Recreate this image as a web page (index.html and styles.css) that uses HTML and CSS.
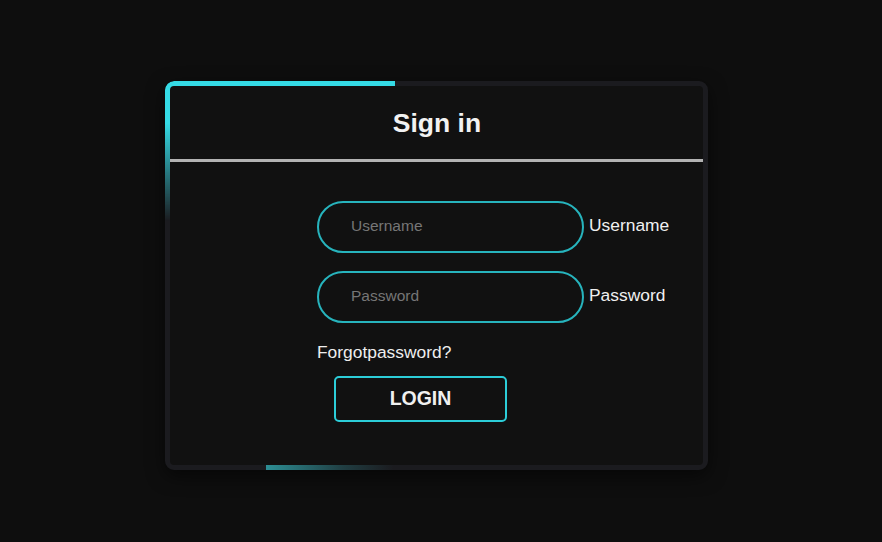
FILE: index.html
```html
<!DOCTYPE html>
<html lang="en">
<head>
<meta charset="utf-8">
<title>Sign in</title>
<link rel="stylesheet" href="styles.css">
</head>
<body>
  <div class="page">
    <div class="card">
      <div class="card-header">
        <h1 class="title">Sign in</h1>
      </div>
      <div class="divider"></div>
      <form class="form">
        <div class="field">
          <input class="input" type="text" placeholder="Username">
          <label class="label">Username</label>
        </div>
        <div class="field">
          <input class="input" type="password" placeholder="Password">
          <label class="label">Password</label>
        </div>
        <div class="forgot">Forgotpassword?</div>
        <button class="login" type="button">LOGIN</button>
      </form>
    </div>
  </div>
</body>
</html>
```

FILE: styles.css
```css
* { box-sizing: border-box; }

html, body {
  margin: 0;
  padding: 0;
  background: #0e0e0e;
  font-family: "Liberation Sans", Arial, sans-serif;
}

.page {
  width: 882px;
  height: 542px;
  padding: 81px 0 0 165px;
}

.card {
  position: relative;
  width: 543px;
  height: 389px;
  background: #111111;
  border: 5px solid #1b1b1f;
  border-radius: 9px;
  box-shadow: 0 6px 18px rgba(0, 0, 0, 0.55);
}

.card::before {
  content: "";
  position: absolute;
  top: -5px;
  left: -5px;
  width: 225px;
  height: 135px;
  border-top: 5px solid #35dbe6;
  border-left: 5px solid #35dbe6;
  border-top-left-radius: 9px;
  -webkit-mask-image: linear-gradient(to bottom, #000 0%, #000 30%, transparent 100%);
  mask-image: linear-gradient(to bottom, #000 0%, #000 30%, transparent 100%);
}

.card::after {
  content: "";
  position: absolute;
  bottom: -5px;
  left: 96px;
  width: 170px;
  height: 5px;
  background: linear-gradient(to right, #2d8f95 0%, rgba(45, 143, 149, 0.3) 45%, rgba(45, 143, 149, 0) 75%);
}

.card-header {
  height: 73px;
  display: flex;
  align-items: center;
  justify-content: center;
}

.title {
  margin: 0;
  color: #f2f2f2;
  font-size: 26.5px;
  font-weight: 700;
  line-height: 1;
  padding: 2px 0 0 1px;
}

.divider {
  height: 3px;
  background: #b3b3b3;
}

.form {
  padding: 39px 0 0 147px;
  display: flex;
  flex-direction: column;
  align-items: flex-start;
}

.field {
  display: flex;
  align-items: center;
  gap: 5px;
  margin-bottom: 18px;
}

.field + .field {
  margin-bottom: 19px;
}

.input {
  width: 267px;
  height: 52px;
  background: transparent;
  border: 2px solid #27b4bd;
  border-radius: 26px;
  padding: 0 0 3px 32px;
  font-family: "Liberation Sans", Arial, sans-serif;
  font-size: 15.5px;
  color: #ddd;
  outline: none;
}

.input::placeholder {
  color: #767676;
}

.label {
  color: #f0f0f0;
  font-size: 17.4px;
  line-height: 20px;
  margin-top: -5px;
}

.forgot {
  color: #eeeeee;
  font-size: 17.4px;
  line-height: 20px;
}

.login {
  margin: 14px 0 0 17px;
  width: 173px;
  height: 46px;
  background: transparent;
  border: 2px solid #2ccdd8;
  border-radius: 5px;
  color: #f0f0f0;
  font-family: "Liberation Sans", Arial, sans-serif;
  font-size: 19.5px;
  font-weight: 700;
  padding-bottom: 2px;
  cursor: pointer;
}
```
